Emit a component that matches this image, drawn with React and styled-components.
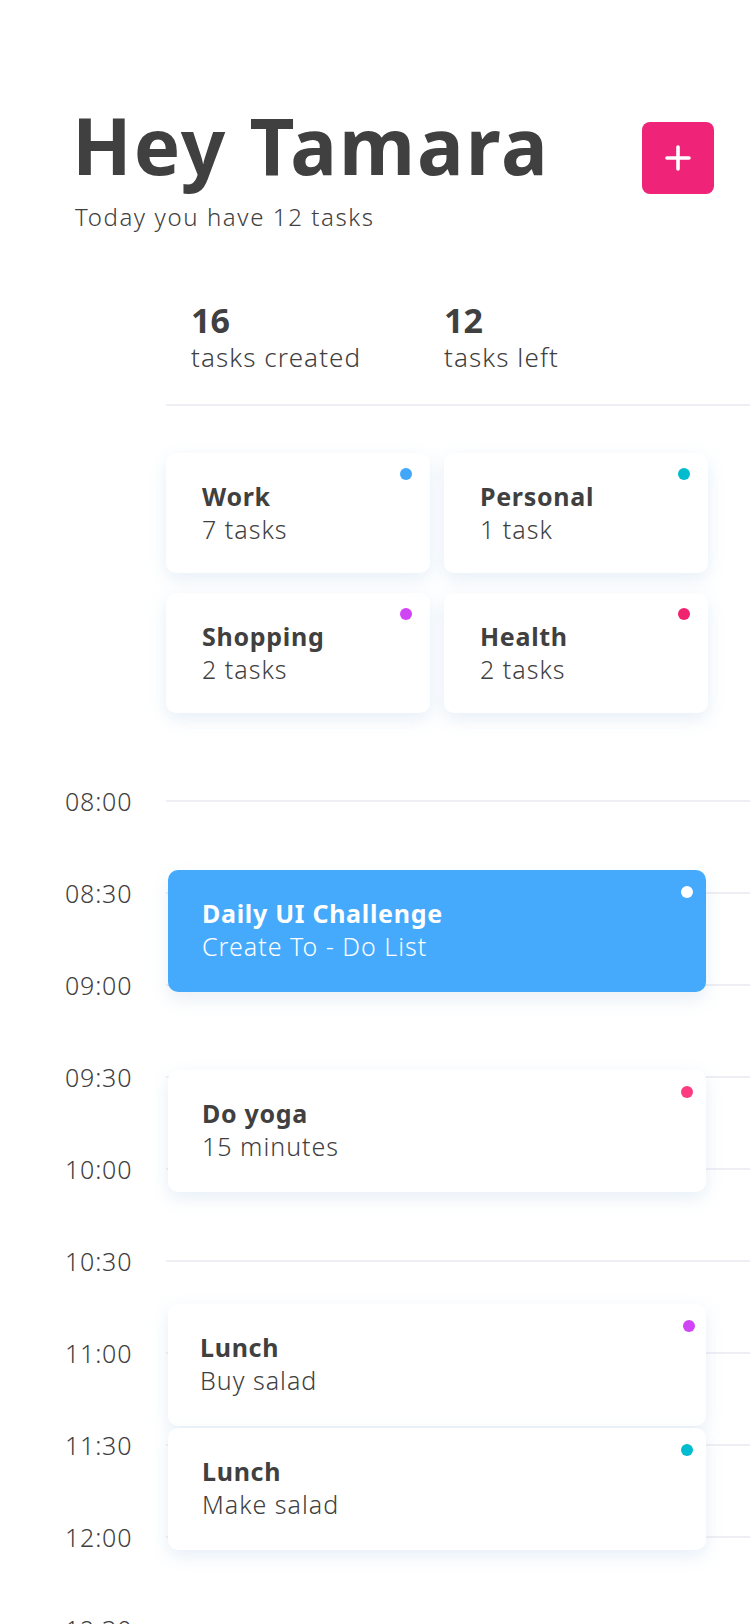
import React from 'react'
import styled, { createGlobalStyle } from 'styled-components'

const GlobalStyle = createGlobalStyle`
  body {
    margin: 0;
    background: #ffffff;
    font-family: "Noto Sans", "Open Sans", sans-serif;
    color: #404040;
  }
`

const Page = styled.div`
  width: 750px;
  overflow: hidden;
`

const Header = styled.header`
  display: flex;
  justify-content: space-between;
  align-items: flex-start;
  padding: 106px 36px 0 75px;
`

const Title = styled.h1`
  margin: 0 0 0 -3px;
  font-size: 78px;
  line-height: 78px;
  font-weight: 700;
  letter-spacing: 2px;
  color: #404040;
`

const Subtitle = styled.p`
  margin: 18px 0 0;
  font-size: 24px;
  line-height: 30px;
  font-weight: 300;
  letter-spacing: 1.6px;
`

const AddButton = styled.button`
  margin-top: 16px;
  width: 72px;
  height: 72px;
  border: none;
  border-radius: 8px;
  background: #ef2377;
  display: grid;
  place-items: center;
  padding: 0;
  cursor: pointer;
`

const Stats = styled.section`
  margin: 69px 0 0 166px;
  padding: 0 0 31px 25px;
  border-bottom: 2px solid #efeef4;
  display: grid;
  grid-template-columns: 253px 253px;
`

const StatNumber = styled.div`
  font-size: 34px;
  line-height: 38px;
  font-weight: 700;
`

const StatLabel = styled.div`
  margin-top: 2px;
  font-size: 26px;
  line-height: 32px;
  font-weight: 300;
  letter-spacing: 1.1px;
`

const Categories = styled.section`
  margin: 47px 0 0 166px;
  display: grid;
  grid-template-columns: 264px 264px;
  gap: 20px 14px;
`

const Card = styled.div`
  position: relative;
  box-sizing: border-box;
  height: ${({ $height }) => $height || 120}px;
  padding: 27px 20px 0 ${({ $inset }) => $inset || 34}px;
  border-radius: 10px;
  background: ${({ $fill }) => $fill || '#ffffff'};
  color: ${({ $fill }) => ($fill ? '#ffffff' : '#404040')};
  box-shadow: ${({ $fill }) =>
    $fill
      ? '0 8px 18px rgba(120, 160, 200, 0.16)'
      : '0 6px 18px rgba(130, 175, 215, 0.2)'};
`

const CardTitle = styled.div`
  font-size: 25px;
  line-height: 33px;
  font-weight: 700;
  letter-spacing: 0.7px;
`

const CardText = styled.div`
  font-size: 25px;
  line-height: 33px;
  font-weight: 300;
  letter-spacing: 1px;
`

const Dot = styled.span`
  position: absolute;
  top: ${({ $top }) => $top}px;
  right: ${({ $right }) => $right}px;
  width: 12px;
  height: 12px;
  border-radius: 50%;
  background: ${({ $color }) => $color};
`

const Timeline = styled.section`
  position: relative;
  margin-top: 42px;
`

const Row = styled.div`
  display: flex;
  align-items: center;
  height: 92px;
`

const Time = styled.div`
  flex: none;
  box-sizing: border-box;
  width: 166px;
  padding-left: 65px;
  font-size: 25px;
  line-height: 30px;
  font-weight: 300;
  letter-spacing: 0.8px;
`

const Rule = styled.div`
  flex: 1;
  height: 2px;
  background: #efeef4;
`

const Event = styled.div`
  position: absolute;
  left: 168px;
  width: 538px;
  top: ${({ $top }) => $top}px;
`

const categories = [
  { name: 'Work', count: '7 tasks', color: '#42a6fb' },
  { name: 'Personal', count: '1 task', color: '#00bccf' },
  { name: 'Shopping', count: '2 tasks', color: '#d144f5' },
  { name: 'Health', count: '2 tasks', color: '#ef2370' },
]

const times = ['08:00', '08:30', '09:00', '09:30', '10:00', '10:30', '11:00', '11:30', '12:00', '12:30']

const events = [
  { title: 'Daily UI Challenge', text: 'Create To - Do List', top: 115, color: '#ffffff', fill: '#45aafc' },
  { title: 'Do yoga', text: '15 minutes', top: 315, color: '#fd3b7f' },
  { title: 'Lunch', text: 'Buy salad', top: 549, color: '#d144f5', inset: 32, dotRight: 11 },
  { title: 'Lunch', text: 'Make salad', top: 673, color: '#00bccf' },
]

function PlusIcon() {
  return (
    <svg width="26" height="26" viewBox="0 0 26 26" fill="none">
      <path d="M13 2v22M2 13h22" stroke="#ffffff" strokeWidth="3.6" strokeLinecap="round" />
    </svg>
  )
}

export default function App() {
  return (
    <Page>
      <GlobalStyle />
      <Header>
        <div>
          <Title>Hey Tamara</Title>
          <Subtitle>Today you have 12 tasks</Subtitle>
        </div>
        <AddButton aria-label="Add task">
          <PlusIcon />
        </AddButton>
      </Header>

      <Stats>
        <div>
          <StatNumber>16</StatNumber>
          <StatLabel>tasks created</StatLabel>
        </div>
        <div>
          <StatNumber>12</StatNumber>
          <StatLabel>tasks left</StatLabel>
        </div>
      </Stats>

      <Categories>
        {categories.map((c) => (
          <Card key={c.name} $inset={36}>
            <Dot $color={c.color} $top={15} $right={18} />
            <CardTitle>{c.name}</CardTitle>
            <CardText>{c.count}</CardText>
          </Card>
        ))}
      </Categories>

      <Timeline>
        {times.map((t) => (
          <Row key={t}>
            <Time>{t}</Time>
            <Rule />
          </Row>
        ))}
        {events.map((e, i) => (
          <Event key={i} $top={e.top}>
            <Card $height={122} $fill={e.fill} $inset={e.inset}>
              <Dot $color={e.color} $top={16} $right={e.dotRight || 13} />
              <CardTitle>{e.title}</CardTitle>
              <CardText>{e.text}</CardText>
            </Card>
          </Event>
        ))}
      </Timeline>
    </Page>
  )
}
